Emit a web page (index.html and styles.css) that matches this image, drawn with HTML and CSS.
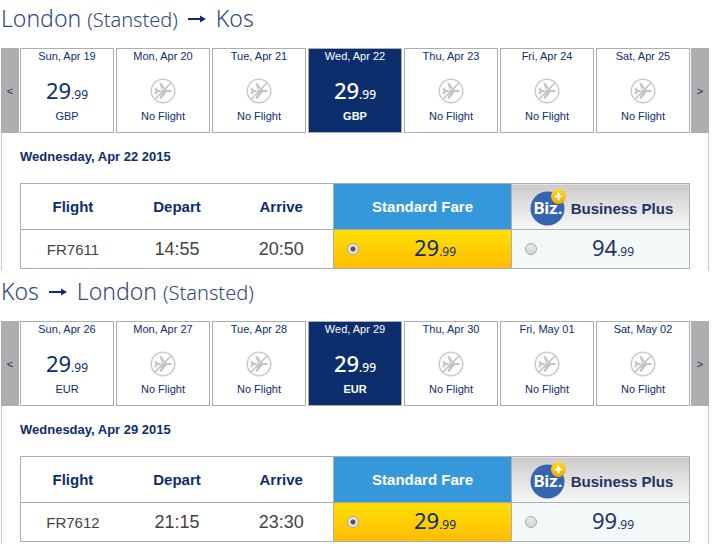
FILE: index.html
```
<!DOCTYPE html>
<html lang="en">
<head>
<meta charset="utf-8">
<title>Select flights</title>
<link rel="stylesheet" href="styles.css">
</head>
<body>
<svg class="defs" aria-hidden="true">
  <defs>
    <linearGradient id="gold" x1="0" y1="0" x2="0" y2="1"><stop offset="0" stop-color="#ffd91a"/><stop offset="1" stop-color="#f5a800"/></linearGradient>
    <symbol id="no-flight" viewBox="0 0 26 26">
      <circle cx="13" cy="13" r="11.8" fill="none" stroke="#c9cacf" stroke-width="1.5"/>
      <path d="M4.300 9.800h1.700l2 2.200h4L9.300 5.300h2.200L16.800 12h3.700q1.800.3 1.800 1t-1.800 1.100h-3.700L11.500 20.700h-2.200l2.700-6.600h-4l-2 2.200H4.300L5.500 13z" fill="#c3c4ca"/>
      <path d="M4.200 20.200L20.200 4.200" stroke="#fff" stroke-width="1"/>
      <path d="M4.900 21.100L21.100 4.900" stroke="#c3c4ca" stroke-width="1.500"/>
    </symbol>
    <symbol id="biz-badge" viewBox="0 0 37 37">
      <circle cx="17.500" cy="19.500" r="17" fill="#3565b1"/>
      <circle cx="28.500" cy="7.500" r="7.500" fill="url(#gold)"/>
      <path d="M28.500 3.800v7.400M24.800 7.500h7.400" stroke="#fff" stroke-width="2.200"/>
    </symbol>
  </defs>
</svg>
<main>
  <section class="journey">
    <h2 class="route">London <small>(Stansted)</small> <svg class="arrow" viewBox="0 0 18 8" role="img" aria-label="to"><path d="M0 4h14" stroke="#0c2e6d" stroke-width="2"/><path d="M12 0.500L18 4l-6 3.500z" fill="#0c2e6d"/></svg> Kos</h2>
    <div class="carousel">
      <button class="step" aria-label="Earlier dates">&lt;</button>
      <div class="days">
        <button class="day"><span>Sun, Apr 19</span><span class="fare">29<small>.99</small></span><span>GBP</span></button>
        <button class="day"><span>Mon, Apr 20</span><svg class="plane"><use href="#no-flight"/></svg><span>No Flight</span></button>
        <button class="day"><span>Tue, Apr 21</span><svg class="plane"><use href="#no-flight"/></svg><span>No Flight</span></button>
        <button class="day selected"><span>Wed, Apr 22</span><span class="fare">29<small>.99</small></span><span>GBP</span></button>
        <button class="day"><span>Thu, Apr 23</span><svg class="plane"><use href="#no-flight"/></svg><span>No Flight</span></button>
        <button class="day"><span>Fri, Apr 24</span><svg class="plane"><use href="#no-flight"/></svg><span>No Flight</span></button>
        <button class="day"><span>Sat, Apr 25</span><svg class="plane"><use href="#no-flight"/></svg><span>No Flight</span></button>
      </div>
      <button class="step" aria-label="Later dates">&gt;</button>
    </div>
    <div class="details">
      <h3 class="date">Wednesday, Apr 22 2015</h3>
      <table class="flights">
        <colgroup><col class="info"><col class="info"><col class="info"><col class="price"><col class="price"></colgroup>
        <thead><tr><th>Flight</th><th>Depart</th><th>Arrive</th><th class="standard">Standard Fare</th>
          <th class="business"><div class="plus"><span class="badge"><svg><use href="#biz-badge"/></svg><b>Biz.</b></span><span>Business Plus</span></div></th></tr></thead>
        <tbody><tr><td class="number">FR7611</td><td>14:55</td><td>20:50</td>
          <td class="option chosen"><label><input type="radio" name="outbound" checked><span class="fare">29<small>.99</small></span></label></td>
          <td class="option"><label><input type="radio" name="outbound"><span class="fare">94<small>.99</small></span></label></td></tr></tbody>
      </table>
    </div>
  </section>
  <section class="journey">
    <h2 class="route">Kos <svg class="arrow" viewBox="0 0 18 8" role="img" aria-label="to"><path d="M0 4h14" stroke="#0c2e6d" stroke-width="2"/><path d="M12 0.500L18 4l-6 3.500z" fill="#0c2e6d"/></svg> London <small>(Stansted)</small></h2>
    <div class="carousel">
      <button class="step" aria-label="Earlier dates">&lt;</button>
      <div class="days">
        <button class="day"><span>Sun, Apr 26</span><span class="fare">29<small>.99</small></span><span>EUR</span></button>
        <button class="day"><span>Mon, Apr 27</span><svg class="plane"><use href="#no-flight"/></svg><span>No Flight</span></button>
        <button class="day"><span>Tue, Apr 28</span><svg class="plane"><use href="#no-flight"/></svg><span>No Flight</span></button>
        <button class="day selected"><span>Wed, Apr 29</span><span class="fare">29<small>.99</small></span><span>EUR</span></button>
        <button class="day"><span>Thu, Apr 30</span><svg class="plane"><use href="#no-flight"/></svg><span>No Flight</span></button>
        <button class="day"><span>Fri, May 01</span><svg class="plane"><use href="#no-flight"/></svg><span>No Flight</span></button>
        <button class="day"><span>Sat, May 02</span><svg class="plane"><use href="#no-flight"/></svg><span>No Flight</span></button>
      </div>
      <button class="step" aria-label="Later dates">&gt;</button>
    </div>
    <div class="details">
      <h3 class="date">Wednesday, Apr 29 2015</h3>
      <table class="flights">
        <colgroup><col class="info"><col class="info"><col class="info"><col class="price"><col class="price"></colgroup>
        <thead><tr><th>Flight</th><th>Depart</th><th>Arrive</th><th class="standard">Standard Fare</th>
          <th class="business"><div class="plus"><span class="badge"><svg><use href="#biz-badge"/></svg><b>Biz.</b></span><span>Business Plus</span></div></th></tr></thead>
        <tbody><tr><td class="number">FR7612</td><td>21:15</td><td>23:30</td>
          <td class="option chosen"><label><input type="radio" name="return" checked><span class="fare">29<small>.99</small></span></label></td>
          <td class="option"><label><input type="radio" name="return"><span class="fare">99<small>.99</small></span></label></td></tr></tbody>
      </table>
    </div>
  </section>
</main>
</body>
</html>
```
FILE: styles.css
```
* { box-sizing: border-box; }
body { margin: 0; background: #fff; color: #0c2e6d; font-family: "Liberation Sans", Arial, sans-serif; }
button { font: inherit; color: inherit; margin: 0; cursor: pointer; }
.defs { position: absolute; width: 0; height: 0; }
main { display: grid; gap: 2px; padding: 0 3px 0 1px; }

.route { margin: 0; height: 48px; color: #2f4a80; font: 300 23px/36px "Noto Sans", "Open Sans", sans-serif; }
.route small { font-size: 20px; }
.arrow { width: 18px; height: 8px; margin: 0 4px; vertical-align: 4px; }

.carousel { display: grid; grid-template-columns: 18px 1fr 18px; gap: 1px; }
.step { border: 0; padding: 0; background: #aeaeae; font-size: 11px; }
.days { display: grid; grid-template-columns: repeat(7, 1fr); gap: 2px; }
.day {
  display: flex; flex-direction: column; align-items: center; justify-content: space-between;
  height: 85px; padding: 0 0 9px; border: 1px solid #aeaeae; background: #fff;
  font-size: 11px; line-height: 14px;
}
.day.selected { background: #0c2e6d; color: #fff; }
.day.selected .fare { font-weight: 500; }
.day.selected span:last-child { font-weight: bold; }
.fare { font-family: "Noto Sans", "Open Sans", sans-serif; font-size: 22px; line-height: 24px; }
.fare small { font-size: 12px; }
.day .fare { padding-top: 12px; line-height: 28px; }
.plane { width: 26px; height: 26px; margin-top: 9px; }

.details { height: 138px; padding: 16px 18px 0; border: solid #c8c8c8; border-width: 0 1px; }
.date { margin: 0 0 18px; font-size: 13px; line-height: 16px; }
.flights { width: 100%; table-layout: fixed; border-collapse: collapse; border: 1px solid #aeaeae; }
.info { width: 15.600%; }
.price { width: 26.600%; }
.flights th, .flights td { padding: 0; border-bottom: 1px solid #aeaeae; text-align: center; }
.flights th { height: 46px; font-size: 15px; }
.flights td { height: 39px; font-size: 18px; color: #444; }
.flights .number { font-size: 15px; }
.flights .standard, .flights .business, .flights .option { border-left: 1px solid #aeaeae; }
.standard { background: #3498db; color: #fff; }
.business { background: linear-gradient(#cbcbcb, #f8f8f8); color: #203468; }
.plus { display: flex; align-items: flex-end; justify-content: center; gap: 4px; padding: 2px 0 0 2px; line-height: 34px; }
.badge { position: relative; width: 37px; height: 37px; }
.badge svg { display: block; width: 37px; height: 37px; }
.badge b { position: absolute; left: 4px; top: 0; color: #fff; font: bold 17px/38px Roboto, sans-serif; }
.flights .option { background: #f3f8f9; color: #203468; }
.flights .chosen { background: linear-gradient(#ffdf04, #ffbb02); color: #0c2e6d; }
.option label { display: flex; align-items: center; padding-left: 13px; }
.option .fare { flex: 1; }
input[type="radio"] { appearance: none; width: 12px; height: 12px; margin: 0; border: 1px solid #a8a8a8; border-radius: 50%; background: linear-gradient(#e8e8e8, #d8d8d8); }
input[type="radio"]:checked { background: radial-gradient(circle, #555 0 2px, #e4e4e4 3px); }
```
